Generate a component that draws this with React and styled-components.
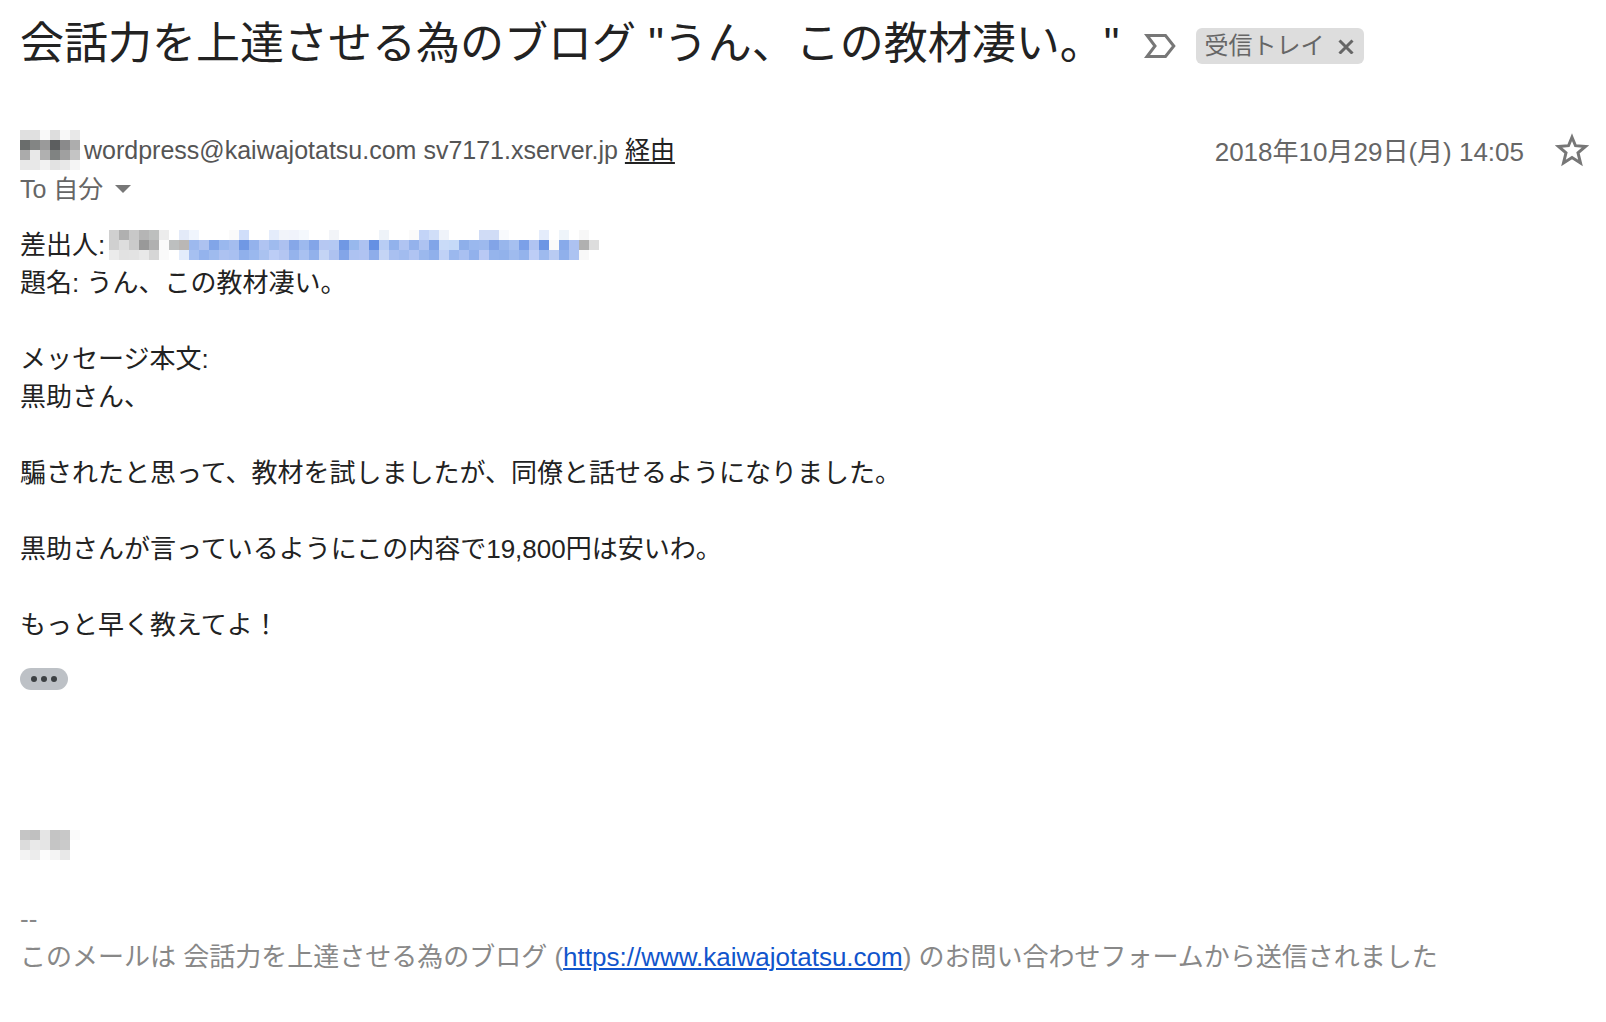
import React, { useState } from 'react';
import styled, { createGlobalStyle } from 'styled-components';

const GlobalStyle = createGlobalStyle`
  body {
    margin: 0;
    background: #fff;
    color: #222;
    font-family: "Liberation Sans", "Noto Sans CJK JP", sans-serif;
  }
`

const Message = styled.main`
  padding: 14px 16px 40px 20px;
`

const SubjectRow = styled.header`
  display: flex;
  align-items: center;
  flex-wrap: wrap;
`

const Subject = styled.h1`
  margin: 0;
  font-size: 44px;
  font-weight: 400;
  line-height: 60px;
`

const IconButton = styled.button`
  display: flex;
  padding: 0;
  border: 0;
  background: none;
  color: ${props => props.$color || '#777'};
  cursor: pointer;
`

const Importance = styled(IconButton)`
  margin: 4px 20px 0 25px;
`

const Label = styled.span`
  display: flex;
  align-items: center;
  gap: 14px;
  height: 36px;
  margin-top: 4px;
  padding: 0 10px 0 8px;
  border-radius: 6px;
  background: #ddd;
  color: #666;
  font-size: 24px;
  line-height: 36px;
`

const SenderRow = styled.div`
  display: flex;
  align-items: center;
  justify-content: space-between;
  height: 40px;
  margin-top: 56px;
`

const Sender = styled.div`
  display: flex;
  align-items: center;
  gap: 4px;
  color: #555;
  font-size: 25px;
  line-height: 38px;
`

const ViaLink = styled.a`
  color: #222;
  text-decoration: underline;
  text-underline-offset: 3px;
`

const Meta = styled.div`
  display: flex;
  align-items: center;
  gap: 30px;
  color: #666;
  font-size: 26px;
  line-height: 38px;
`

const SentAt = styled.time`
  padding-top: 4px;
`

const Recipient = styled.div`
  display: flex;
  align-items: center;
  gap: 12px;
  color: #666;
  font-size: 25px;
  line-height: 38px;
`

const Body = styled.div`
  margin-top: 18px;
  font-size: 26px;
  line-height: 38px;
`

const Field = styled.div`
  display: flex;
  align-items: center;
  gap: 4px;
`

const Paragraph = styled.p`
  margin: 38px 0 0;
  white-space: pre-line;
`

const TrimmedButton = styled.button`
  display: flex;
  align-items: center;
  justify-content: center;
  gap: 4px;
  width: 48px;
  height: 22px;
  margin: 24px 0 140px;
  padding: 0;
  border: 0;
  border-radius: 11px;
  background: #bdc1c6;
  cursor: pointer;
`

const Dot = styled.span`
  width: 6px;
  height: 6px;
  border-radius: 50%;
  background: #3c4043;
`

const Signature = styled.footer`
  margin-top: 40px;
  color: #888;
`

const SiteLink = styled.a`
  color: #15c;
`

// each row is a list of colours, "-" leaves the cell empty
const senderName = [
  'e0e0e0 e0e0e0 f9f9f9 dddddd f8f8f8 e8e8e8',
  '6a6d6c 838584 9a9a9a 5c5e5f 8a8a8b adadad',
  'ababab e8e8e8 b0b0b0 808382 a0a0a0 c4c4c4',
  'e8e8e8 e8e8e8 f2f2f2 e2e2e2 e8e8e8 f5f5f5',
]

const fromAddress = [
  'd0d0d0 b0b0b0 c8c8c8 b5b5b5 bdbfbe ececec - e3eaf8 f0f5fd - - - fafafa d0defa - - e4ecfb f1f4fa f0f3fb f4f8fd - - f2f4f8 - - - - eef3f9 - - fafafa c3d4f7 d0def8 eff3fa - - - d0dcf6 d0dcf6 f8fafd - - - e4ecfb - eef4fa - f7f7f7 -',
  'd0d0d0 dddddd cacaca 999999 b0b0b0 fafafa bdbfbf bab7b5 9db9ee adc2f0 81a5e8 9ab8ee a4bdef 7098e4 94b2ec b0c4f2 9fbbee adc1f0 86a7e8 9db9ee 83a5e8 b6c8f2 b4c9f3 7098e4 98b8ed adc2f1 6590e3 b8cdf4 92b2ec b0c4f2 94b2ec aec3f1 81a5e8 c9dbf8 c5daf8 8eafea 9ab8ee 9db9ee 82a4e7 98b6ec a6c0f0 7ba0e8 b0c4f2 6d96e4 fafafa 88aaea adc2f1 b0b0b0 dddddd',
  'ebebeb e2e2e2 e3e3e3 e8e8e8 d6d6d6 fafafa - e3ecfb a6c0f1 94b3ed 9fbbee adc2f1 a9c0f1 90b0eb 9ab8ee aac2f0 bccdf6 b4c6f2 95b3ec a9c1f1 92b1eb c4d4f5 aec2f0 83a5e8 adc2f1 b0c3f2 8eadea c4d4f5 a9c0f0 a2bcef b0c4f2 9bb8ed 90b0eb c0d1f6 9bb8ee a9c0f1 92b1ec b9c9f4 95b4ec 92b2eb 9fbbee 94b3ec bdcdf6 9ebaee b9cbf3 90b0eb acc3f1 f8f8f8 -',
]

const signedName = [
  'c5c5c5 c0c0c0 e5e5e5 c4c4c4 c8c8c8 fafafa',
  'dcdcdc e9e9e9 e5e5e5 c5c5c5 cacaca -',
  'f3f3f3 ececec fcfcfc f4f4f4 e8e8e8 -',
]

const MosaicSvg = styled.svg`
  display: block;
  flex: none;
`

const Mosaic = ({ rows }) => {
  const cells = rows.map(row => row.split(' '));

  return (
    <MosaicSvg width={cells[0].length * 10} height={cells.length * 10} shapeRendering="crispEdges" aria-hidden="true">
      {
        cells.map((row, y) => row.map((color, x) => (
          color !== '-' && <rect key={`${x}-${y}`} x={x * 10} y={y * 10} width="10" height="10" fill={`#${color}`} />
        )))
      }
    </MosaicSvg>
  )
}

const App = () => {
  const [starred, setStarred] = useState(false);

  return (
    <Message>
      <GlobalStyle />
      <SubjectRow>
        <Subject>会話力を上達させる為のブログ "うん、この教材凄い。"</Subject>
        <Importance aria-label="重要マーク">
          <svg width="32" height="24" viewBox="0 0 32 24" fill="none" stroke="currentColor" strokeWidth="3">
            <path d="M3 1.5H21.5L29.8 12L21.5 22.5H3L11 12Z" />
          </svg>
        </Importance>
        <Label>
          受信トレイ
          <IconButton $color="#666" aria-label="ラベルを削除">
            <svg width="16" height="16" viewBox="0 0 16 16" stroke="currentColor" strokeWidth="3">
              <path d="M1.5 2.5L14.5 15.5M14.5 2.5L1.5 15.5" />
            </svg>
          </IconButton>
        </Label>
      </SubjectRow>

      <SenderRow>
        <Sender>
          <Mosaic rows={senderName} />
          <span>wordpress@kaiwajotatsu.com sv7171.xserver.jp <ViaLink href="#via">経由</ViaLink></span>
        </Sender>
        <Meta>
          <SentAt dateTime="2018-10-29T14:05">2018年10月29日(月) 14:05</SentAt>
          <IconButton aria-label="スター" aria-pressed={starred} onClick={() => setStarred(!starred)}>
            <svg width="36" height="34" viewBox="0 0 36 34" fill={starred ? 'currentColor' : 'none'} stroke="currentColor" strokeWidth="3">
              <path d="M18 4.2L21.5 12.7L31.5 13.5L24 19.8L26.5 30L18 24.6L9.5 30L12 19.8L4.5 13.5L14.5 12.7Z" />
            </svg>
          </IconButton>
        </Meta>
      </SenderRow>
      <Recipient>
        <span>To 自分</span>
        <IconButton aria-label="詳細を表示">
          <svg width="16" height="8" viewBox="0 0 16 8" fill="currentColor">
            <path d="M0 0H16L8 8Z" />
          </svg>
        </IconButton>
      </Recipient>

      <Body>
        <Field>差出人: <Mosaic rows={fromAddress} /></Field>
        <Field>題名: うん、この教材凄い。</Field>
        <Paragraph>{'メッセージ本文:\n黒助さん、'}</Paragraph>
        <Paragraph>騙されたと思って、教材を試しましたが、同僚と話せるようになりました。</Paragraph>
        <Paragraph>黒助さんが言っているようにこの内容で19,800円は安いわ。</Paragraph>
        <Paragraph>もっと早く教えてよ！</Paragraph>
        <TrimmedButton aria-label="省略された内容を表示">
          <Dot />
          <Dot />
          <Dot />
        </TrimmedButton>
        <Mosaic rows={signedName} />
        <Signature>
          <div>--</div>
          <div>
            このメールは 会話力を上達させる為のブログ (<SiteLink href="https://www.kaiwajotatsu.com">https://www.kaiwajotatsu.com</SiteLink>) のお問い合わせフォームから送信されました
          </div>
        </Signature>
      </Body>
    </Message>
  )
}

export default App;
